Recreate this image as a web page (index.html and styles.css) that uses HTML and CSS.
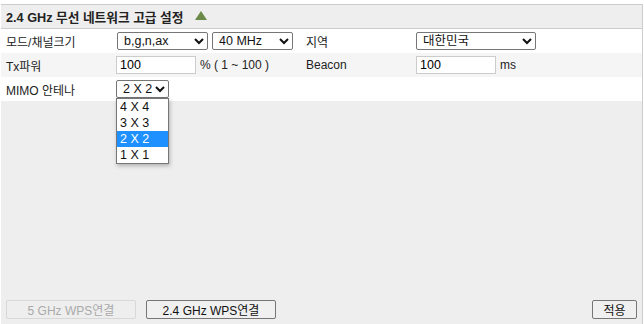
FILE: index.html
```html
<!DOCTYPE html>
<html lang="ko">
<head>
    <meta charset="UTF-8">
    <meta name="viewport" content="width=device-width, initial-scale=1.0">
    <title>2.4 GHz 무선 네트워크 고급 설정</title>
    <link rel="stylesheet" href="styles.css">
</head>
<body>
    <div class="panel">
        <div class="panel-head">
            <span class="title">2.4 GHz 무선 네트워크 고급 설정</span>
            <span class="toggle"></span>
        </div>
        <div class="row">
            <div class="label">모드/채널크기</div>
            <div class="field">
                <select class="sel-mode">
                    <option>b,g,n,ax</option>
                </select>
                <select class="sel-bw">
                    <option>40 MHz</option>
                </select>
            </div>
            <div class="label">지역</div>
            <div class="field">
                <select class="sel-region">
                    <option>대한민국</option>
                </select>
            </div>
        </div>
        <div class="row alt">
            <div class="label">Tx파워</div>
            <div class="field">
                <input type="text" class="num" value="100">
                <span class="unit">% ( 1 ~ 100 )</span>
            </div>
            <div class="label">Beacon</div>
            <div class="field">
                <input type="text" class="num" value="100">
                <span class="unit">ms</span>
            </div>
        </div>
        <div class="row">
            <div class="label">MIMO 안테나</div>
            <div class="field mimo">
                <select class="sel-mimo">
                    <option>2 X 2</option>
                </select>
                <ul class="dropdown">
                    <li>4 X 4</li>
                    <li>3 X 3</li>
                    <li class="active">2 X 2</li>
                    <li>1 X 1</li>
                </ul>
            </div>
        </div>
        <div class="panel-foot">
            <button class="btn wps" disabled>5 GHz WPS연결</button>
            <button class="btn wps">2.4 GHz WPS연결</button>
            <button class="btn apply">적용</button>
        </div>
    </div>
</body>
</html>
```

FILE: styles.css
```css
body {
    margin: 0;
    padding-top: 4px;
    background: #fff;
    font-family: "Liberation Sans", Arial, "Noto Sans CJK KR", sans-serif;
    font-size: 12px;
    color: #222;
}

.panel {
    width: 642px;
    height: 320px;
    box-sizing: border-box;
    margin-left: 1px;
    background: #eee;
    border-top: 1px solid #ccc;
    border-right: 1px solid #ccc;
    display: flex;
    flex-direction: column;
}

.panel-head {
    height: 23px;
    display: flex;
    align-items: center;
    padding-left: 5px;
    border-bottom: 1px solid #ccc;
    background: #eee;
}

.title {
    font-weight: bold;
    font-size: 12.7px;
    color: #222;
}

.toggle {
    width: 0;
    height: 0;
    margin-left: 12px;
    margin-bottom: 2px;
    border-left: 6px solid transparent;
    border-right: 6px solid transparent;
    border-bottom: 9px solid #6a8a4a;
}

.row {
    display: grid;
    grid-template-columns: 110px 190px 110px 1fr;
    align-items: center;
    height: 24px;
    padding-left: 5px;
    background: #fff;
}

.row.alt {
    background: #f5f5f5;
}

.field {
    display: flex;
    align-items: center;
    gap: 4px;
}

select {
    height: 18px;
    padding: 0 0 0 2px;
    font-family: inherit;
    font-size: 12.5px;
    color: #111;
    background: #fff;
    border: 1px solid #767676;
    border-radius: 2px;
}

.sel-mode {
    width: 91px;
    margin-left: 1px;
}

.sel-bw {
    width: 81px;
}

.sel-region {
    width: 120px;
}

.sel-mimo {
    width: 53px;
}

.num {
    width: 80px;
    height: 18px;
    box-sizing: border-box;
    padding: 0 3px;
    font-family: inherit;
    font-size: 12.5px;
    border: 1px solid #ccc;
}

.unit {
    color: #222;
}

.mimo {
    position: relative;
}

.dropdown {
    position: absolute;
    left: 0;
    top: 18px;
    width: 51px;
    margin: 0;
    padding: 0;
    list-style: none;
    background: #fff;
    border: 1px solid #767676;
    box-shadow: 1px 2px 4px rgba(0, 0, 0, 0.25);
    z-index: 2;
}

.dropdown li {
    height: 16px;
    line-height: 16px;
    padding-left: 3px;
    font-size: 12.5px;
    color: #111;
}

.dropdown li.active {
    background: #1e90ff;
    color: #fff;
}

.panel-foot {
    margin-top: auto;
    display: flex;
    align-items: center;
    padding: 0 5px 5px 5px;
}

.btn {
    height: 19px;
    padding: 0;
    font-family: inherit;
    font-size: 12px;
    color: #111;
    background: #f0f0f0;
    border: 1px solid #767676;
    border-radius: 2px;
}

.wps {
    width: 130px;
    margin-right: 10px;
}

.wps:disabled {
    color: #aaa;
    background: #eee;
    border-color: #d8d8d8;
}

.apply {
    width: 45px;
    margin-left: auto;
}
```
